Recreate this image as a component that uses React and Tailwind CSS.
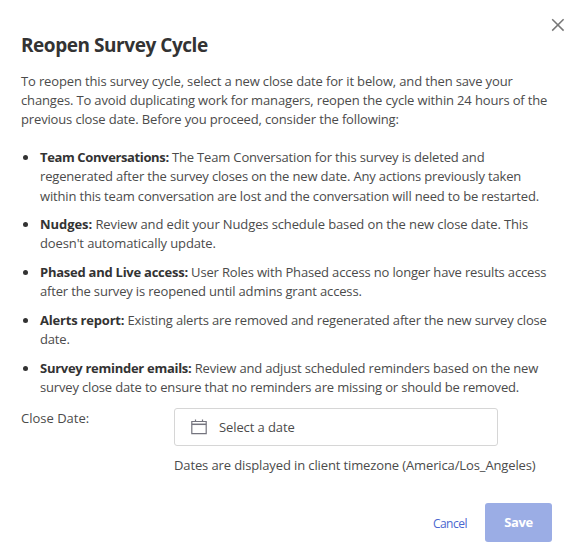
const items = [
  {
    title: 'Team Conversations:',
    tracking: 'tracking-[-0.37px]',
    lines: [
      'The Team Conversation for this survey is deleted and',
      'regenerated after the survey closes on the new date. Any actions previously taken',
      'within this team conversation are lost and the conversation will need to be restarted.',
    ],
  },
  {
    title: 'Nudges:',
    tracking: 'tracking-[-0.05px]',
    body: 'tracking-[-0.12px]',
    lines: ['Review and edit your Nudges schedule based on the new close date. This', "doesn't automatically update."],
  },
  {
    title: 'Phased and Live access:',
    tracking: 'tracking-[-0.25px]',
    lines: [
      'User Roles with Phased access no longer have results access',
      'after the survey is reopened until admins grant access.',
    ],
  },
  {
    title: 'Alerts report:',
    tracking: 'tracking-[-0.2px]',
    lines: ['Existing alerts are removed and regenerated after the new survey close', 'date.'],
  },
  {
    title: 'Survey reminder emails:',
    tracking: 'tracking-[-0.28px]',
    lines: [
      'Review and adjust scheduled reminders based on the new',
      'survey close date to ensure that no reminders are missing or should be removed.',
    ],
  },
];

function Lines({ lines }) {
  return lines.map((line, i) => (
    <span key={line}>
      {i > 0 && <br />}
      {line}
    </span>
  ));
}

export default function App() {
  return (
    <main className="h-[556px] w-[587px] overflow-hidden whitespace-nowrap bg-white pl-[21px] pr-[35px] font-['Open_Sans','Noto_Sans',sans-serif] text-[13px] leading-[19.2px] tracking-[-0.165px] text-[#4b4b4b]">
      <header className="relative pt-[33px]">
        <h1 className="text-[19px] font-bold leading-6 tracking-[-0.45px] text-[#333]">Reopen Survey Cycle</h1>
        <button aria-label="Close" className="absolute right-[-13px] top-[18px] size-[14px] text-[#777]">
          <svg viewBox="0 0 14 14" className="size-full" fill="none" stroke="currentColor" strokeWidth="1.5">
            <path d="M1.2 1.2 12.6 12.6M12.6 1.2 1.2 12.6" />
          </svg>
        </button>
      </header>
      <p className="mt-[14.5px] tracking-[-0.145px]">
        <Lines
          lines={[
            'To reopen this survey cycle, select a new close date for it below, and then save your',
            'changes. To avoid duplicating work for managers, reopen the cycle within 24 hours of the',
            'previous close date. Before you proceed, consider the following:',
          ]}
        />
      </p>
      <ul className="mt-[19px] flex flex-col gap-[9.5px]">
        {items.map((item) => (
          <li key={item.title} className="flex">
            <span className="ml-[1.5px] mt-[7px] size-[5px] shrink-0 rounded-full bg-[#333]" />
            <p className={`ml-[12.5px] ${item.body ?? ''}`}>
              <b className={`font-bold text-[#333] ${item.tracking}`}>{item.title}</b> <Lines lines={item.lines} />
            </p>
          </li>
        ))}
      </ul>
      <div className="mt-[11px] flex">
        <label className="w-[153px] pt-px tracking-[0px]">Close Date:</label>
        <div>
          <div className="flex h-[38px] w-[324px] items-center rounded-[3px] border border-[#d6d6d6] pl-4">
            <svg viewBox="0 0 16 16" className="size-4" fill="none" stroke="#74747e">
              <path d="M.8 2.5h14.4v12.2H.8zM4.5.5v2M11.5.5v2" strokeWidth="1.2" />
              <path d="M.8 5.3h14.4" strokeWidth="1.5" />
            </svg>
            <span className="ml-3 tracking-[-0.1px]">Select a date</span>
          </div>
          <p className="mt-[10px] tracking-[-0.12px]">Dates are displayed in client timezone (America/Los_Angeles)</p>
        </div>
      </div>
      <footer className="mt-[27px] flex items-center justify-end">
        <button className="mr-[18px] pt-1 text-[12px] tracking-[-0.5px] text-[#4a67cf]">Cancel</button>
        <button className="h-[39px] w-[67px] rounded-[3px] bg-[#9bade5] pt-0.5 font-bold tracking-[-0.4px] text-white">Save</button>
      </footer>
    </main>
  );
}
